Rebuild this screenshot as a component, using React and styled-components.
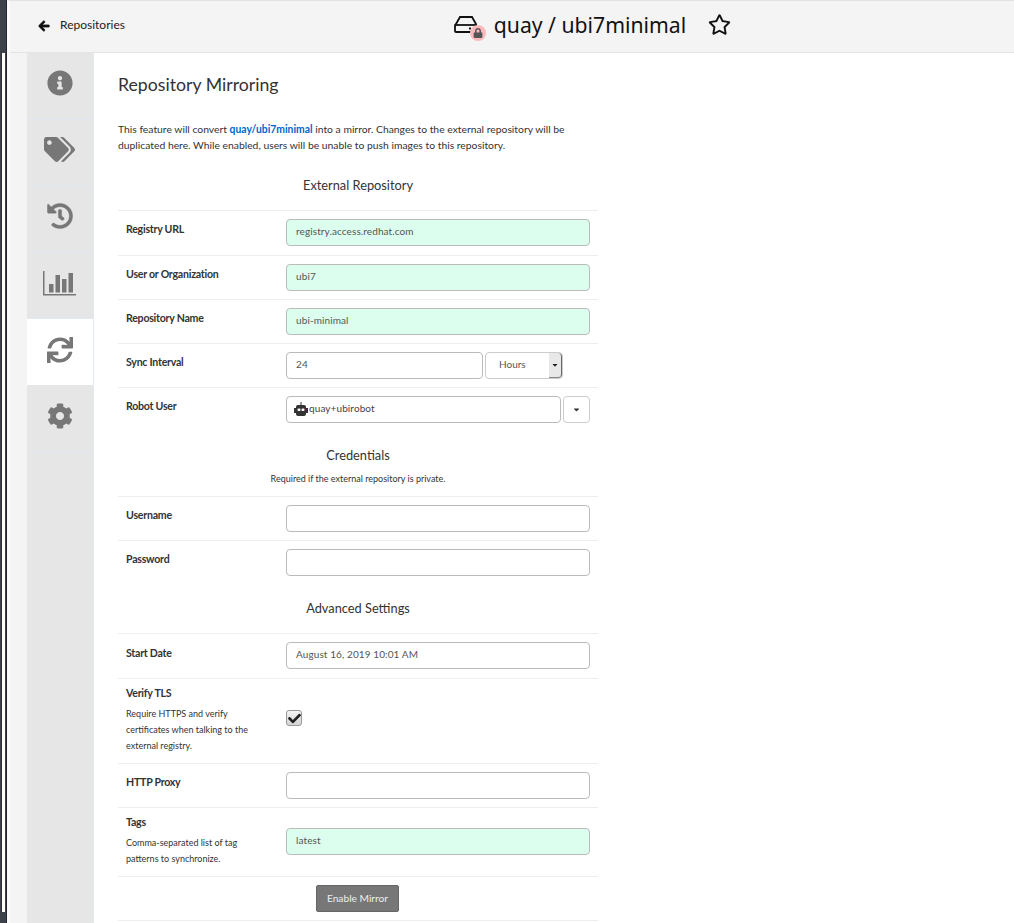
import React from 'react';
import styled, { createGlobalStyle } from 'styled-components';
import { FaArrowLeft, FaRegStar, FaInfoCircle, FaTags, FaHistory, FaSync, FaCog, FaLock, FaCheck, FaCaretDown } from 'react-icons/fa';

const Global = createGlobalStyle`
  html, body { margin: 0; padding: 0; background: #fff; }
  body { font-family: Lato, "Liberation Sans", sans-serif; color: #333; overflow: hidden; }
  * { box-sizing: border-box; }
`;

const Page = styled.div`
  display: flex;
  width: 1014px;
  height: 923px;
  overflow: hidden;
`;

const Desktop = styled.div`
  width: 7px;
  flex: none;
  background: #3c414a;
  border-right: 1px solid #2a2035;
  padding-top: 53px;
`;

const DesktopWindow = styled.div`
  width: 4px;
  height: 859px;
  margin-left: 1px;
  background: #fff;
  border-left: 1px solid #333;
`;

const Main = styled.div`
  flex: 1;
  display: flex;
  flex-direction: column;
  border-top: 1px solid #e2e2e2;
  border-left: 3px solid #fbfbfb;
`;

const Header = styled.header`
  height: 52px;
  flex: none;
  display: grid;
  grid-template-columns: 1fr;
  position: relative;
  background: #f4f4f4;
  border-bottom: 1px solid #e4e4e4;
  align-items: center;
  padding-bottom: 5px;
`;

const BackLink = styled.a`
  position: absolute;
  left: 28px;
  top: 17px;
  display: flex;
  align-items: center;
  gap: 10px;
  font-size: 12px;
  line-height: 14px;
  color: #222;
  svg { font-size: 12px; color: #111; stroke: #111; stroke-width: 40; margin-top: 2px; }
`;

const Title = styled.div`
  display: flex;
  align-items: center;
  justify-content: center;
  padding-left: 161px;
  font-family: "Noto Sans", "Open Sans", sans-serif;
  font-size: 21.2px;
  color: #111;
`;

const RepoIcon = styled.span`
  position: relative;
  width: 32px;
  height: 28px;
  margin-right: 8px;
  padding-top: 2px;
`;

const LockBadge = styled.span`
  position: absolute;
  left: 16px;
  top: 15px;
  width: 16px;
  height: 16px;
  border-radius: 50%;
  background: #fbb9bd;
  display: flex;
  align-items: center;
  justify-content: center;
  color: #555;
  font-size: 10px;
`;

const Star = styled.span`
  display: flex;
  margin-left: 22px;
  font-size: 23px;
  color: #111;
`;

const Body = styled.div`
  flex: 1;
  display: flex;
`;

const Gutter = styled.div`
  width: 17px;
  flex: none;
  background: #f4f4f4;
`;

const Sidebar = styled.nav`
  width: 67px;
  flex: none;
  background: #e6e6e6;
  border-right: 1px solid #e3e9f1;
`;

const Tab = styled.div`
  height: 66.6px;
  display: flex;
  align-items: center;
  justify-content: center;
  padding: 0 1px 5px 0;
  font-size: ${p => p.$size || 26}px;
  color: #777;
  background: ${p => (p.$active ? '#fff' : 'transparent')};
  border-bottom: 1px solid ${p => (p.$active ? '#e6e6e6' : '#e3e9f1')};
  svg { stroke: #777; stroke-width: ${p => p.$stroke || 0}; }
`;

const Content = styled.main`
  width: 504px;
  padding: 0 0 0 24px;
`;

const Heading = styled.h3`
  margin: 21px 0 25px;
  font-size: 17.7px;
  line-height: 22px;
  font-weight: 400;
  color: #333;
`;

const Intro = styled.p`
  margin: 0 0 14px;
  width: 470px;
  font-size: 10.35px;
  line-height: 16px;
  color: #333;
  a { color: #0066cc; font-weight: 700; }
`;

const Section = styled.div`
  text-align: center;
  font-size: 12.8px;
  line-height: 18px;
  color: #333;
  padding: ${p => p.$pad || '9px 0 16px'};
`;

const Note = styled.div`
  font-size: 9px;
  line-height: 14px;
  margin-top: 8px;
  color: #333;
`;

const Row = styled.div`
  display: grid;
  grid-template-columns: 160px 1fr;
  height: ${p => p.$h}px;
  border-top: 1px solid #eee;
  padding-left: 8px;
`;

const LabelCol = styled.div`
  padding-top: ${p => p.$top || 10}px;
`;

const Label = styled.div`
  font-size: 10.6px;
  letter-spacing: -0.25px;
  line-height: 16px;
  font-weight: 700;
  color: #333;
`;

const Help = styled.div`
  font-size: 9px;
  line-height: 16px;
  margin-top: 5px;
  width: 126px;
  color: #333;
`;

const FieldCol = styled.div`
  padding-top: ${p => p.$top || 8}px;
  display: flex;
  gap: 2px;
  width: 304px;
`;

const Field = styled.div`
  flex: ${p => (p.$w ? 'none' : 1)};
  width: ${p => (p.$w ? `${p.$w}px` : 'auto')};
  height: 27px;
  border: 1px solid #bbb;
  border-radius: 4px;
  background: ${p => (p.$ok ? '#dcfeee' : '#fff')};
  padding: 0 9px;
  font-size: 10px;
  letter-spacing: 0.1px;
  line-height: 23px;
  color: #555;
`;

const Select = styled.div`
  width: 78px;
  height: 27px;
  border: 1px solid #ccc;
  border-radius: 4px;
  padding-left: 13px;
  font-size: 10px;
  line-height: 23px;
  color: #555;
  position: relative;
`;

const Spinner = styled.span`
  position: absolute;
  right: 0;
  top: 0;
  bottom: 0;
  width: 13px;
  background: #e8e8e8;
  border-right: 1px solid #666;
  border-bottom: 1px solid #888;
  border-radius: 0 4px 4px 0;
  display: flex;
  align-items: center;
  justify-content: center;
  font-size: 8px;
  color: #222;
`;

const RobotField = styled(Field)`
  padding: 0 0 0 6px;
  display: flex;
  align-items: center;
  color: #444;
  line-height: 20px;
  span { margin-bottom: 4px; }
`;

const DropButton = styled.div`
  width: 27px;
  height: 27px;
  border: 1px solid #ccc;
  border-radius: 4px;
  display: flex;
  align-items: center;
  justify-content: center;
  font-size: 9px;
  color: #333;
`;

const Checkbox = styled.div`
  width: 16px;
  height: 16px;
  border: 1px solid #999;
  border-radius: 3px;
  background: linear-gradient(#f4f4f4, #d4d4d4);
  color: #222;
  font-size: 13px;
  display: flex;
  align-items: center;
  justify-content: center;
`;

const ButtonRow = styled.div`
  height: 45px;
  border-top: 1px solid #eee;
  border-bottom: 1px solid #eee;
  display: flex;
  align-items: center;
  padding-left: 198px;
`;

const Button = styled.div`
  width: 83px;
  height: 27px;
  background: #777;
  border: 1px solid #666;
  border-radius: 2px;
  color: #eee;
  font-size: 10.2px;
  line-height: 25px;
  text-align: center;
`;

const ChartIcon = () => (
  <svg width="33" height="25" viewBox="0 0 33 25" fill="#777">
    <path d="M0 0h1.500v23H33v1.500H0z" />
    <path d="M6 13h4.500v8.500H6zM12.500 4H17v17.500h-4.500zM19 8h4.500v13.500H19zM25.500 2H30v19.500h-4.500z" />
  </svg>
);

const RobotIcon = () => (
  <svg width="16" height="16" viewBox="0 0 16 16" fill="#333">
    <path d="M7.500 0h1v4h-1z" />
    <path d="M3 5a2 2 0 0 1 2-2h6a2 2 0 0 1 2 2v1h2v5h-2v1a2 2 0 0 1-2 2H5a2 2 0 0 1-2-2v-1H1V6h2z" />
    <rect x="4.500" y="6.500" width="3" height="2.500" rx="1" fill="#fff" />
    <rect x="8.500" y="6.500" width="3" height="2.500" rx="1" fill="#fff" />
  </svg>
);

const App = () => (
  <Page>
    <Global />
    <Desktop><DesktopWindow /></Desktop>
    <Main>
      <Header>
        <BackLink><FaArrowLeft />Repositories</BackLink>
        <Title>
          <RepoIcon>
            <svg width="24" height="20" viewBox="0 0 24 20" fill="none" stroke="#111" strokeWidth="1.8">
              <path d="M2 9 6 2h12l4 7v7a1 1 0 0 1-1 1H2a1 1 0 0 1-1-1V10z" />
              <path d="M1 10h22" />
              <path d="M15 13.500h2M19 13.500h1" />
            </svg>
            <LockBadge><FaLock /></LockBadge>
          </RepoIcon>
          quay / ubi7minimal
          <Star><FaRegStar /></Star>
        </Title>
      </Header>
      <Body>
        <Gutter />
        <Sidebar>
          <Tab><FaInfoCircle /></Tab>
          <Tab $size={31}><FaTags /></Tab>
          <Tab $stroke={8}><FaHistory /></Tab>
          <Tab><ChartIcon /></Tab>
          <Tab $active><FaSync /></Tab>
          <Tab><FaCog /></Tab>
        </Sidebar>
        <Content>
          <Heading>Repository Mirroring</Heading>
          <Intro>
            This feature will convert <a>quay/ubi7minimal</a> into a mirror. Changes to the external repository will be duplicated here. While enabled, users will be unable to push images to this repository.
          </Intro>
          <Section>External Repository</Section>
          <Row $h={45}>
            <LabelCol><Label>Registry URL</Label></LabelCol>
            <FieldCol><Field $ok>registry.access.redhat.com</Field></FieldCol>
          </Row>
          <Row $h={44}>
            <LabelCol><Label>User or Organization</Label></LabelCol>
            <FieldCol><Field $ok>ubi7</Field></FieldCol>
          </Row>
          <Row $h={44}>
            <LabelCol><Label>Repository Name</Label></LabelCol>
            <FieldCol><Field $ok>ubi-minimal</Field></FieldCol>
          </Row>
          <Row $h={44}>
            <LabelCol><Label>Sync Interval</Label></LabelCol>
            <FieldCol><Field $w={197}>24</Field><Select>Hours<Spinner><FaCaretDown /></Spinner></Select></FieldCol>
          </Row>
          <Row $h={44}>
            <LabelCol><Label>Robot User</Label></LabelCol>
            <FieldCol><RobotField><RobotIcon /><span>quay+ubirobot</span></RobotField><DropButton><FaCaretDown /></DropButton></FieldCol>
          </Row>
          <Section $pad="15px 0 10px">
            Credentials
            <Note>Required if the external repository is private.</Note>
          </Section>
          <Row $h={44}>
            <LabelCol><Label>Username</Label></LabelCol>
            <FieldCol><Field /></FieldCol>
          </Row>
          <Row $h={45}>
            <LabelCol><Label>Password</Label></LabelCol>
            <FieldCol><Field /></FieldCol>
          </Row>
          <Section $pad="14px 0 16px">Advanced Settings</Section>
          <Row $h={45}>
            <LabelCol $top={11}><Label>Start Date</Label></LabelCol>
            <FieldCol><Field>August 16, 2019 10:01 AM</Field></FieldCol>
          </Row>
          <Row $h={85}>
            <LabelCol $top={6}>
              <Label>Verify TLS</Label>
              <Help>Require HTTPS and verify certificates when talking to the external registry.</Help>
            </LabelCol>
            <FieldCol $top={31}><Checkbox><FaCheck /></Checkbox></FieldCol>
          </Row>
          <Row $h={44}>
            <LabelCol><Label>HTTP Proxy</Label></LabelCol>
            <FieldCol><Field /></FieldCol>
          </Row>
          <Row $h={69}>
            <LabelCol $top={6}>
              <Label>Tags</Label>
              <Help>Comma-separated list of tag patterns to synchronize.</Help>
            </LabelCol>
            <FieldCol $top={20}><Field $ok>latest</Field></FieldCol>
          </Row>
          <ButtonRow><Button>Enable Mirror</Button></ButtonRow>
        </Content>
      </Body>
    </Main>
  </Page>
);

export default App;
